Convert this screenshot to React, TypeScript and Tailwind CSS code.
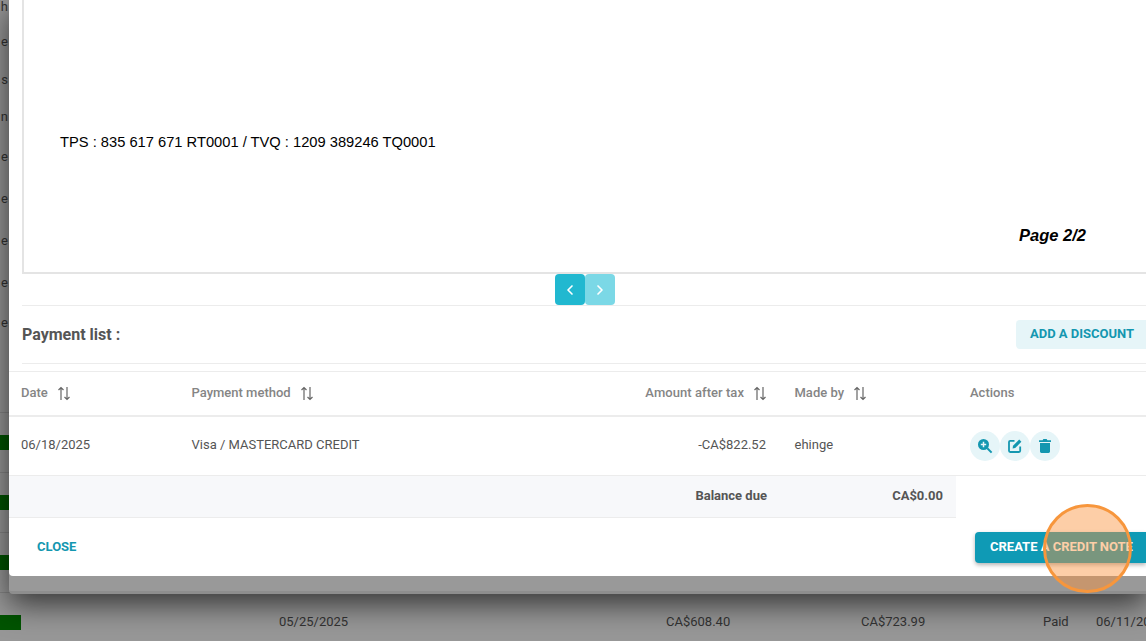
import React from 'react'
import { ChevronLeft, ChevronRight } from 'lucide-react'

const sideLetters = [
    { letter: 'h', cls: 'mt-0' },
    { letter: 'e', cls: 'mt-[21px]' },
    { letter: 's', cls: 'mt-[24px]' },
    { letter: 'n', cls: 'mt-[23px]' },
    { letter: 'e', cls: 'mt-[26px]' },
    { letter: 'e', cls: 'mt-[28px]' },
    { letter: 'e', cls: 'mt-[28px]' },
    { letter: 'e', cls: 'mt-[28px]' },
    { letter: 'e', cls: 'mt-[26px]' },
]

const SortIcon = () => (
    <svg width="14" height="15" viewBox="0 0 14 15" fill="none" stroke="currentColor" strokeWidth="1.2" className="ml-[9px] shrink-0 text-[#666]">
        <path d="M4 14V1.5M1.5 4L4 1.5L6.5 4" />
        <path d="M10 1V13.5M7.5 11L10 13.5L12.5 11" />
    </svg>
)

const ZoomIcon = () => (
    <svg width="16" height="16" viewBox="0 0 16 16">
        <circle cx="6.5" cy="6.5" r="5.5" fill="currentColor" />
        <path d="M6.5 3.8V9.2M3.8 6.5H9.2" stroke="#e6f5f8" strokeWidth="1.5" />
        <path d="M10.3 10.3L14.6 14.6" stroke="currentColor" strokeWidth="2" />
    </svg>
)

const EditIcon = () => (
    <svg width="16" height="16" viewBox="0 0 16 16" fill="none">
        <path d="M7.5 2.8H3.2C2.5 2.8 2 3.3 2 4V12.8C2 13.5 2.5 14 3.2 14H12C12.7 14 13.2 13.5 13.2 12.8V8.5" stroke="currentColor" strokeWidth="1.8" />
        <path d="M5.6 10.4L6 7.8L12.2 1.6L14.4 3.8L8.2 10Z" fill="currentColor" />
    </svg>
)

const TrashIcon = () => (
    <svg width="14" height="16" viewBox="0 0 14 16" fill="currentColor">
        <path d="M1 2.2H4.6L5.4 1H8.6L9.4 2.2H13V4H1Z" />
        <path d="M2 5H12V13.6C12 14.4 11.4 15 10.6 15H3.4C2.6 15 2 14.4 2 13.6Z" />
    </svg>
)

const ActionButton = ({ children }: { children: React.ReactNode }) => (
    <button className="w-[30px] h-[30px] rounded-full bg-[#e6f5f8] text-[#1397b0] flex items-center justify-center">
        {children}
    </button>
)

const Background = () => (
    <div className="text-[13px] text-[#333]">
        <div className="flex flex-col h-[412px] items-end w-[8px] overflow-hidden">
            {sideLetters.map((row, i) => (
                <span key={i} className={`${row.cls} leading-[14px] text-[#333]`}>{row.letter}</span>
            ))}
        </div>
        {[0, 1, 2].map(i => (
            <div key={i} className="h-[60px] border-t border-[#858585] flex items-center">
                <span className="w-[21px] h-[15px] shrink-0 bg-[#005400]" />
            </div>
        ))}
        <div className="h-[60px] border-t border-[#858585] flex items-center whitespace-nowrap pb-[1px]">
            <span className="w-[21px] h-[15px] shrink-0 bg-[#005400]" />
            <span className="ml-[258px] w-[69px] shrink-0">05/25/2025</span>
            <span className="ml-[318px] w-[64px] shrink-0">CA$608.40</span>
            <span className="ml-[131px] w-[64px] shrink-0">CA$723.99</span>
            <span className="ml-[118px] w-[26px] shrink-0">Paid</span>
            <span className="ml-[27px] shrink-0">06/11/2025</span>
        </div>
    </div>
)

const Invoice = () => (
    <div className="h-[274px] ml-[13px] border-l-2 border-b-2 border-[#e4e4e4] text-black font-['Liberation_Sans',sans-serif] flex flex-col">
        <p className="mt-[133px] ml-[36px] text-[14.7px] leading-[18px] whitespace-nowrap">
            TPS : 835 617 671 RT0001 / TVQ : 1209 389246 TQ0001
        </p>
        <p className="mt-[75px] ml-[995px] text-[16.5px] leading-[18px] font-bold italic whitespace-nowrap">Page 2/2</p>
    </div>
)

const Pager = () => (
    <div className="h-[31px] flex justify-center pl-[14px] text-white">
        <button className="w-[30px] h-[31px] rounded-[4px] bg-[#21b8d0] flex items-center justify-center">
            <ChevronLeft size={16} strokeWidth={2.5} />
        </button>
        <button className="w-[30px] h-[31px] rounded-[4px] bg-[#7bd8e6] flex items-center justify-center">
            <ChevronRight size={16} strokeWidth={2.5} />
        </button>
    </div>
)

const PaymentTable = () => (
    <div className="border-t border-[#ececec] mt-[8px] text-[13px]">
        <div className="grid grid-cols-[170px_449px_154px_174px_1fr] h-[45px] items-center border-b-2 border-[#ececec] font-medium text-[#858585] pb-[1px]">
            <div className="pl-[12px] flex items-center">Date <SortIcon /></div>
            <div className="pl-[12.5px] flex items-center">Payment method <SortIcon /></div>
            <div className="flex items-center justify-end pr-[15px] tracking-[0.05px]">Amount after tax <SortIcon /></div>
            <div className="pl-[12.5px] flex items-center">Made by <SortIcon /></div>
            <div className="pl-[14px]">Actions</div>
        </div>
        <div className="grid grid-cols-[170px_449px_154px_174px_1fr] h-[59px] items-center border-b border-[#ececec] text-[#555] pb-[2px]">
            <div className="pl-[12px]">06/18/2025</div>
            <div className="pl-[12.5px]">Visa / MASTERCARD CREDIT</div>
            <div className="text-right pr-[16px]">-CA$822.52</div>
            <div className="pl-[12.5px]">ehinge</div>
            <div className="pl-[14px] flex mt-[2px]">
                <ActionButton><ZoomIcon /></ActionButton>
                <ActionButton><EditIcon /></ActionButton>
                <ActionButton><TrashIcon /></ActionButton>
            </div>
        </div>
        <div className="grid grid-cols-[773px_174px] w-[947px] h-[42px] items-center bg-[#f7f8fa] border-b border-[#ececec] font-bold text-[#555] pb-[2px]">
            <div className="text-right pr-[15px]">Balance due</div>
            <div className="text-right pr-[13px]">CA$0.00</div>
        </div>
    </div>
)

const App = () => {
    return (
        <div className="relative w-[1146px] h-[641px] overflow-hidden bg-[#979797] font-['Roboto',sans-serif]">
            <Background />

            <div className="absolute left-[9px] top-0 right-0 h-[594px] rounded-bl-[4px] bg-[#999] border-b-[3px] border-[#8e8e8e] shadow-[0_10px_30px_rgba(0,0,0,0.65)]">
                <div className="h-[576px] bg-white rounded-bl-[4px]">
                    <Invoice />
                    <Pager />
                    <div className="ml-[13px] border-t border-[#ececec] h-[59px] flex items-center justify-between border-b">
                        <h2 className="text-[16px] font-bold text-[#555]">Payment list :</h2>
                        <button className="w-[130px] h-[29px] rounded-l-[4px] bg-[#e6f5f8] text-[#1397b0] text-[13px] font-bold text-left pl-[14px] pb-[2px] whitespace-nowrap">
                            ADD A DISCOUNT
                        </button>
                    </div>
                    <div className="-mt-[1px]"><PaymentTable /></div>
                    <div className="flex items-center justify-between h-[58px] text-[13px] font-bold">
                        <button className="ml-[28px] text-[#1397b0]">CLOSE</button>
                        <button className="w-[171px] h-[31px] rounded-l-[4px] bg-[#0f9ab5] text-white text-left pl-[15px] whitespace-nowrap shadow-[0_2px_4px_rgba(0,0,0,0.3)]">
                            CREATE A CREDIT NOTE
                        </button>
                    </div>
                </div>
            </div>

            <div className="absolute left-[1043px] top-[504px] w-[89px] h-[89px] rounded-full border-[3px] border-[#f7963c] bg-[#fb923c]/45" />
        </div>
    )
}

export default App
